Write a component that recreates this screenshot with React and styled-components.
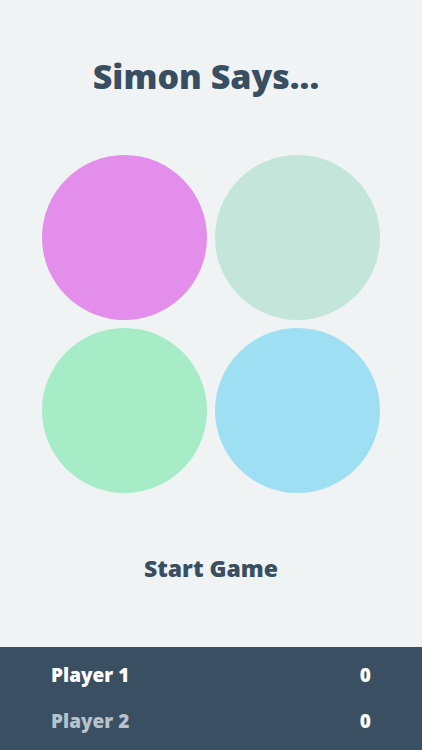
import React from "react";
import styled, { createGlobalStyle } from "styled-components";

const GlobalStyle = createGlobalStyle`
  html, body {
    margin: 0;
    padding: 0;
    background: #eff3f4;
  }
  body {
    font-family: "Open Sans", Lato, sans-serif;
  }
`;

const pads = ["#e28eea", "#c3e5da", "#a6ecc6", "#9fdff3"];

const players = [
  { name: "Player 1", score: 0, active: true },
  { name: "Player 2", score: 0, active: false },
];

export default function App() {
  return (
    <>
      <GlobalStyle />
      <Screen>
        <Main>
          <Title>Simon Says...</Title>
          <Board>
            {pads.map((color) => (
              <Pad key={color} $color={color} />
            ))}
          </Board>
          <StartButton>Start Game</StartButton>
        </Main>
        <ScoreBar>
          {players.map((p) => (
            <ScoreRow key={p.name} $active={p.active}>
              <span>{p.name}</span>
              <Score>{p.score}</Score>
            </ScoreRow>
          ))}
        </ScoreBar>
      </Screen>
    </>
  );
}

const Screen = styled.div`
  width: 422px;
  height: 750px;
  display: flex;
  flex-direction: column;
  background: #eff3f4;
`;

const Main = styled.div`
  flex: 1;
  display: flex;
  flex-direction: column;
  align-items: center;
`;

const Title = styled.h1`
  margin: 56px 0 0;
  padding-right: 10px;
  font-size: 34px;
  line-height: 40px;
  font-weight: 800;
  color: #394e61;
`;

const Board = styled.div`
  margin-top: 59px;
  display: grid;
  grid-template-columns: 165px 165px;
  gap: 8px;
`;

const Pad = styled.div`
  width: 165px;
  height: 165px;
  border-radius: 50%;
  background: ${(p) => p.$color};
  cursor: pointer;
`;

const StartButton = styled.button`
  margin-top: 61px;
  padding: 0;
  border: none;
  background: none;
  font-family: inherit;
  font-size: 23px;
  line-height: 28px;
  font-weight: 800;
  color: #394e61;
  cursor: pointer;
`;

const ScoreBar = styled.div`
  height: 103px;
  box-sizing: border-box;
  padding: 5px 51px 0;
  background: #3a4f61;
  display: flex;
  flex-direction: column;
`;

const ScoreRow = styled.div`
  height: 46px;
  display: flex;
  align-items: center;
  justify-content: space-between;
  font-size: 19px;
  font-weight: 800;
  color: ${(p) => (p.$active ? "#ffffff" : "#b6c2cc")};
`;

const Score = styled.span`
  color: #ffffff;
`;
